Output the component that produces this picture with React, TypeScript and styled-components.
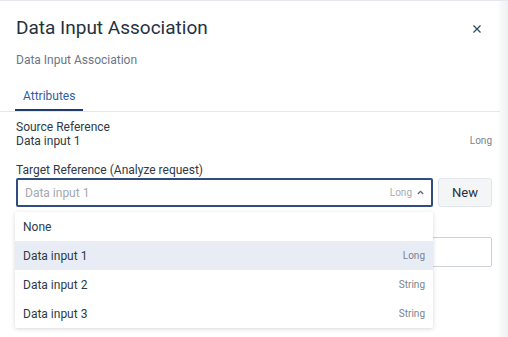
import React from "react";
import styled, { createGlobalStyle } from "styled-components";

const GlobalStyle = createGlobalStyle`
  html, body {
    margin: 0;
    padding: 0;
    background: #ffffff;
  }
  body {
    font-family: Roboto, "Noto Sans", Arial, sans-serif;
    color: #2e3a48;
  }
`;

const Frame = styled.div`
  width: 508px;
  height: 337px;
  overflow: hidden;
  border-top: 1px solid #e4e7eb;
  box-sizing: border-box;
  background: linear-gradient(90deg, #ffffff 497px, #f7f8f9 501px, #eef0f2 508px);
`;

const Dialog = styled.div`
  display: flex;
  flex-direction: column;
`;

const Header = styled.div`
  display: flex;
  align-items: flex-start;
  justify-content: space-between;
  padding: 15px 27px 0 16px;
`;

const Title = styled.h1`
  margin: 0;
  font-size: 19px;
  line-height: 24px;
  font-weight: 400;
  color: #26313f;
`;

const CloseButton = styled.button`
  border: 0;
  background: none;
  padding: 0;
  width: 8px;
  height: 8px;
  margin-top: 9px;
  display: flex;
  color: #2f4566;
`;

const Subtitle = styled.p`
  margin: 12px 0 0 16px;
  font-size: 12px;
  line-height: 16px;
  color: #6b7684;
`;

const TabList = styled.div`
  display: flex;
  margin-top: 12px;
  margin-right: 8px;
  padding-left: 15px;
  border-bottom: 1px solid #e3e6ea;
`;

const Tab = styled.div<{ $active?: boolean }>`
  padding: 8px 8px 5px 8px;
  font-size: 12px;
  line-height: 16px;
  color: ${(p) => (p.$active ? "#2f5f9e" : "#5b6672")};
  border-bottom: 2px solid ${(p) => (p.$active ? "#1f3a6b" : "transparent")};
`;

const Body = styled.div`
  padding: 8px 16px 0 16px;
  display: flex;
  flex-direction: column;
`;

const Label = styled.div`
  font-size: 12px;
  line-height: 14px;
  color: #2e3a48;
`;

const ValueRow = styled.div`
  display: flex;
  justify-content: space-between;
  align-items: center;
  font-size: 12px;
  line-height: 14px;
  height: 14px;
`;

const TypeText = styled.span<{ $muted?: boolean }>`
  font-size: 10px;
  line-height: 14px;
  color: ${(p) => (p.$muted ? "#a6acb3" : "#7a8490")};
`;

const Field = styled.div`
  margin-top: 15px;
  display: flex;
  flex-direction: column;
  gap: 1px;
`;

const SelectRow = styled.div`
  display: flex;
  gap: 5px;
  position: relative;
`;

const Select = styled.div`
  flex: 1;
  height: 29px;
  box-sizing: border-box;
  border: 2px solid #2f4d7f;
  border-radius: 2px;
  display: flex;
  align-items: center;
  padding: 0 7px 0 7px;
  font-size: 12px;
`;

const Placeholder = styled.span`
  flex: 1;
  color: #a3a9b0;
`;

const Caret = styled.span`
  display: flex;
  margin-left: 5px;
  color: #5a6574;
`;

const Button = styled.button`
  width: 54px;
  height: 29px;
  box-sizing: border-box;
  border: 1px solid #e3e6ea;
  background: #f4f5f7;
  border-radius: 3px;
  font-family: inherit;
  font-size: 13px;
  color: #26313f;
`;

const Input = styled.div`
  margin-top: 29px;
  height: 30px;
  box-sizing: border-box;
  border: 1px solid #cdd2d8;
  border-radius: 2px;
`;

const Menu = styled.ul`
  position: absolute;
  top: 34px;
  left: -1px;
  width: 418px;
  margin: 0;
  padding: 0;
  list-style: none;
  background: #fff;
  box-shadow: 0 1px 4px rgba(30, 40, 55, 0.18);
  border-radius: 2px;
  z-index: 2;
`;

const Option = styled.li<{ $selected?: boolean }>`
  height: 29px;
  display: flex;
  align-items: center;
  justify-content: space-between;
  padding: 0 8px 0 8px;
  font-size: 12px;
  color: #2e3a48;
  background: ${(p) => (p.$selected ? "#e8edf5" : "transparent")};
`;

const options = [
  { name: "None", type: "" },
  { name: "Data input 1", type: "Long", selected: true },
  { name: "Data input 2", type: "String" },
  { name: "Data input 3", type: "String" },
];

export default function App() {
  return (
    <>
      <GlobalStyle />
      <Frame>
        <Dialog>
          <Header>
            <Title>Data Input Association</Title>
            <CloseButton aria-label="Close">
              <svg width="8" height="8" viewBox="0 0 8 8">
                <path d="M0.5 0.5 L7.5 7.5 M7.5 0.5 L0.5 7.5" stroke="currentColor" strokeWidth="1.2" />
              </svg>
            </CloseButton>
          </Header>
          <Subtitle>Data Input Association</Subtitle>
          <TabList>
            <Tab $active>Attributes</Tab>
          </TabList>
          <Body>
            <Label>Source Reference</Label>
            <ValueRow>
              <span>Data input 1</span>
              <TypeText>Long</TypeText>
            </ValueRow>
            <Field>
              <Label>Target Reference (Analyze request)</Label>
              <SelectRow>
                <Select>
                  <Placeholder>Data input 1</Placeholder>
                  <TypeText $muted>Long</TypeText>
                  <Caret>
                    <svg width="7" height="5" viewBox="0 0 7 5">
                      <path d="M0.8 4 L3.5 1.3 L6.2 4" fill="none" stroke="currentColor" strokeWidth="1.3" />
                    </svg>
                  </Caret>
                </Select>
                <Button>New</Button>
                <Menu>
                  {options.map((o) => (
                    <Option key={o.name} $selected={o.selected}>
                      <span>{o.name}</span>
                      <TypeText>{o.type}</TypeText>
                    </Option>
                  ))}
                </Menu>
              </SelectRow>
              <Input />
            </Field>
          </Body>
        </Dialog>
      </Frame>
    </>
  );
}
